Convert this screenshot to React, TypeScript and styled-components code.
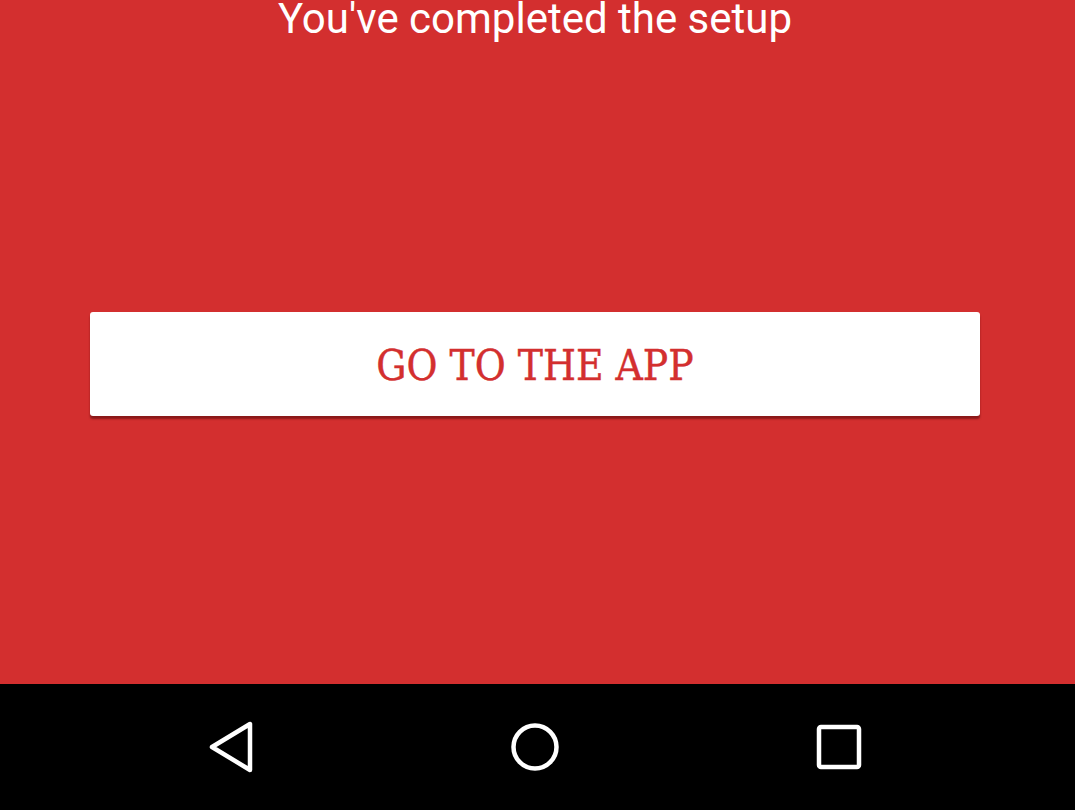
import React from "react";
import styled, { createGlobalStyle } from "styled-components";

const Global = createGlobalStyle`
  html, body { margin: 0; padding: 0; background: #000; }
  #root { width: 1075px; height: 810px; }
`;

const Screen = styled.div`
  width: 1075px;
  height: 810px;
  display: flex;
  flex-direction: column;
  overflow: hidden;
`;

const Content = styled.main`
  flex: 1;
  background: #d32f2f;
  display: flex;
  flex-direction: column;
  align-items: stretch;
  padding: 0 95px 0 90px;
`;

const Title = styled.h1`
  margin: 0;
  font-family: Roboto, "Liberation Sans", sans-serif;
  font-weight: 400;
  font-size: 42px;
  line-height: 38px;
  height: 40px;
  color: #fff;
  text-align: center;
  padding-left: 0;
`;

const Button = styled.button`
  margin-top: 272px;
  height: 104px;
  border: none;
  border-radius: 3px;
  background: #fff;
  box-shadow: 0 3px 2px rgba(90, 10, 10, 0.6);
  font-family: "DejaVu Serif", "Liberation Serif", serif;
  font-stretch: condensed;
  font-size: 42px;
  color: #d32f2f;
  cursor: pointer;
  padding: 2px 0 0 0;
  -webkit-text-stroke: 0.4px #d32f2f;
`;

const NavBar = styled.nav`
  height: 126px;
  background: #000;
  display: flex;
  align-items: center;
  justify-content: space-between;
  padding: 0 206px 0 200px;
`;

const NavIcon = styled.svg`
  width: 60px;
  height: 60px;
  display: block;
`;

export default function App() {
  return (
    <>
      <Global />
      <Screen>
        <Content>
          <Title>You've completed the setup</Title>
          <Button>GO TO THE APP</Button>
        </Content>
        <NavBar>
          <NavIcon viewBox="0 0 60 60">
            <path d="M50 7 L50 53 L12 30 Z" fill="none" stroke="#fff" strokeWidth="4.5" strokeLinejoin="round" />
          </NavIcon>
          <NavIcon viewBox="0 0 60 60">
            <circle cx="30" cy="30" r="21.5" fill="none" stroke="#fff" strokeWidth="4.5" />
          </NavIcon>
          <NavIcon viewBox="0 0 60 60">
            <rect x="10" y="10" width="40" height="40" rx="2" fill="none" stroke="#fff" strokeWidth="4.5" />
          </NavIcon>
        </NavBar>
      </Screen>
    </>
  );
}
